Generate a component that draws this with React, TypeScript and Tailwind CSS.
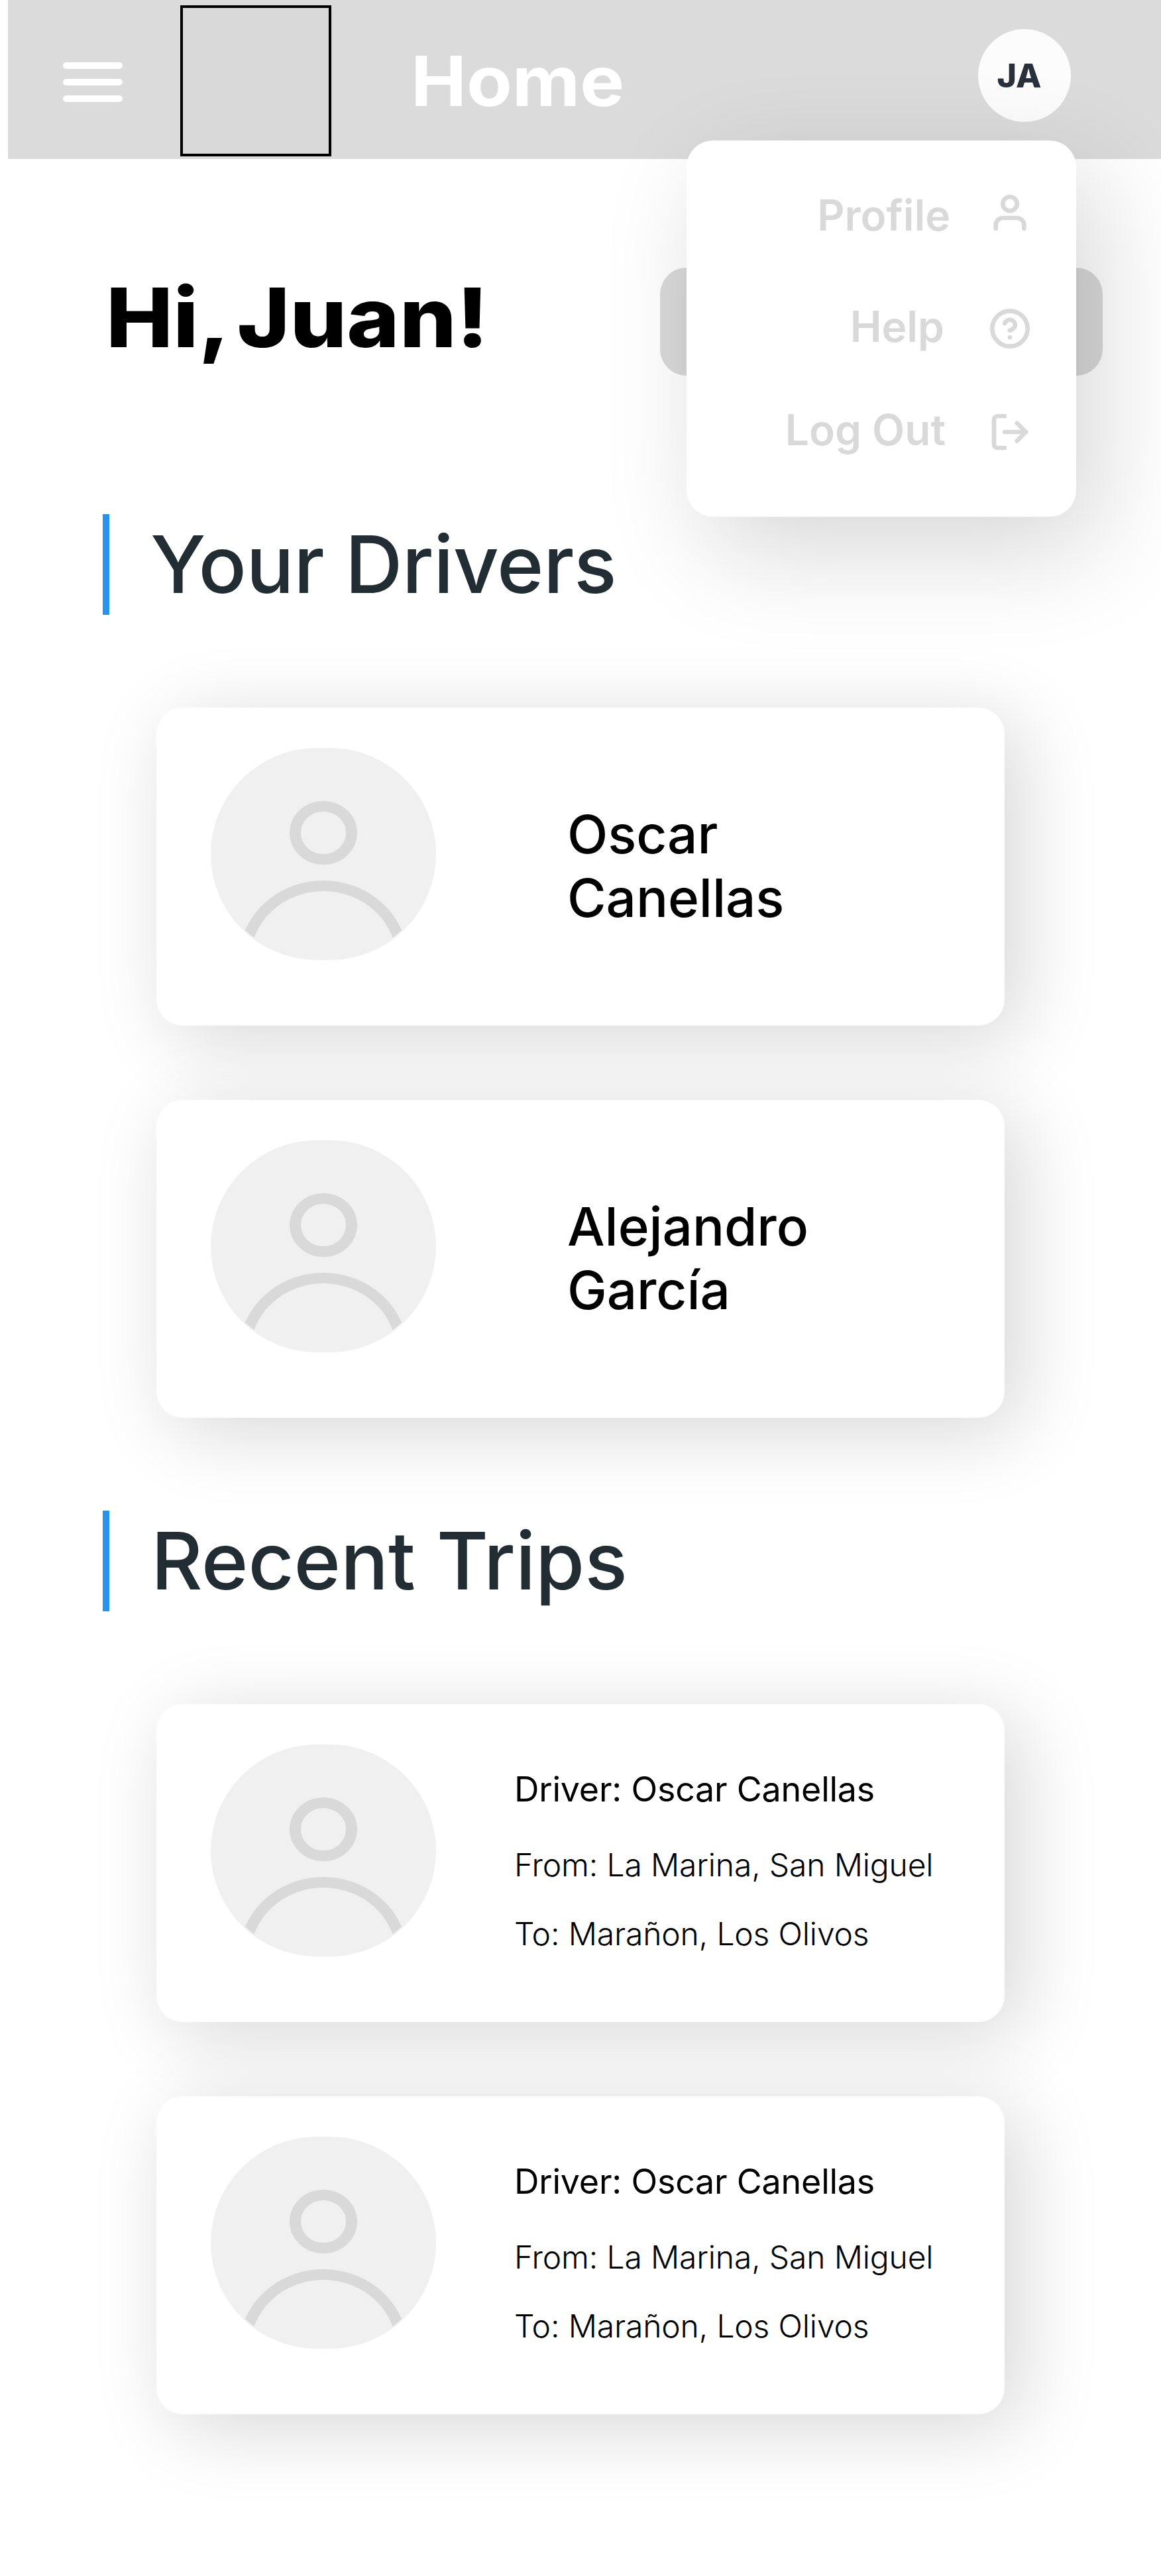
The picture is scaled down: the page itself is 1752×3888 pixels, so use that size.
import type { ReactNode } from "react";

const drivers = [
  ["Oscar", "Canellas"],
  ["Alejandro", "García"],
];

const trips = [
  { driver: "Oscar Canellas", from: "La Marina, San Miguel", to: "Marañon, Los Olivos" },
  { driver: "Oscar Canellas", from: "La Marina, San Miguel", to: "Marañon, Los Olivos" },
];

function Icon({ children }: { children: ReactNode }) {
  return (
    <svg
      viewBox="0 0 24 24"
      className="size-16 shrink-0"
      fill="none"
      stroke="currentColor"
      strokeWidth="2.5"
      strokeLinecap="round"
      strokeLinejoin="round"
    >
      {children}
    </svg>
  );
}

function Avatar() {
  return (
    <div className="h-80 w-[340px] shrink-0 overflow-hidden rounded-full bg-[#f0f0f0]">
      <svg viewBox="0 0 20 20" preserveAspectRatio="none" className="h-full w-full" fill="none" stroke="#d9d9d9">
        <clipPath id="avatar-clip">
          <circle cx="10" cy="10" r="10" />
        </clipPath>
        <g clipPath="url(#avatar-clip)">
          <circle cx="10" cy="8" r="2.5" />
          <circle cx="10" cy="20" r="7" />
        </g>
      </svg>
    </div>
  );
}

function Card({ children }: { children: ReactNode }) {
  return (
    <div className="flex h-[480px] w-[1280px] rounded-[40px] bg-white pt-[61px] pl-[82px] shadow-[24px_20px_120px_rgba(0,0,0,0.16)]">
      <Avatar />
      {children}
    </div>
  );
}

function SectionTitle({ className, children }: { className: string; children: ReactNode }) {
  return (
    <h2
      className={`ml-[155px] flex h-[152px] items-center border-l-[10px] border-[#2694e8] text-[120px] leading-[152px] font-medium text-[#222d33] ${className}`}
    >
      {children}
    </h2>
  );
}

function MenuRow({
  label,
  className,
  labelClass,
  children,
}: {
  label: string;
  className: string;
  labelClass: string;
  children: ReactNode;
}) {
  return (
    <div className={`flex h-16 items-start justify-end pr-[68px] ${className}`}>
      <span className={`text-[64px] leading-[64px] font-semibold whitespace-nowrap ${labelClass}`}>{label}</span>
      {children}
    </div>
  );
}

function UserMenu() {
  return (
    <div className="absolute top-[212px] left-[1036px] h-[568px] w-[588px] rounded-[40px] bg-white pt-[77px] text-[#d9d9d9] shadow-[32px_50px_160px_rgba(0,0,0,0.16)]">
      <MenuRow label="Profile" className="gap-[58px]" labelClass="mt-1">
        <Icon>
          <path d="M20 21v-2a4 4 0 0 0-4-4H8a4 4 0 0 0-4 4v2" />
          <circle cx="12" cy="7" r="4" />
        </Icon>
      </MenuRow>
      <MenuRow label="Help" className="mt-[111px] gap-[67px]" labelClass="-mt-[3px]">
        <Icon>
          <circle cx="12" cy="12" r="10" />
          <path d="M9.09 9a3 3 0 0 1 5.83 1c0 2-3 3-3 3" />
          <path d="M12 17h.01" />
        </Icon>
      </MenuRow>
      <MenuRow label="Log Out" className="mt-[92px] gap-[65px]" labelClass="-mt-[3px]">
        <Icon>
          <path d="M9 21H5a2 2 0 0 1-2-2V5a2 2 0 0 1 2-2h4" />
          <path d="m16 17 5-5-5-5" />
          <path d="M21 12H9" />
        </Icon>
      </MenuRow>
    </div>
  );
}

export default function App() {
  return (
    <div className="relative h-[3888px] w-[1752px] overflow-hidden bg-white font-['Inter',sans-serif] text-black">
      <header className="ml-3 flex h-60 bg-[#dbdbdb]">
        <div className="mt-[94px] ml-[83px] flex w-[90px] flex-col gap-[15px]">
          <div className="h-2.5 rounded-full bg-white" />
          <div className="h-2.5 rounded-full bg-white" />
          <div className="h-2.5 rounded-full bg-white" />
        </div>
        <div className="mt-2 ml-[87px] size-[228px] border-4 border-black bg-[#d9d9d9]" />
        <h1 className="mt-[62px] ml-[120px] origin-left scale-x-[1.07] text-[105px] leading-[120px] font-bold text-white">
          Home
        </h1>
        <div className="mt-11 mr-[136px] ml-auto flex size-[140px] items-center justify-center rounded-full bg-[#fcfcfc] pr-4 text-[50px] leading-none font-extrabold text-[#2a303c]">
          JA
        </div>
      </header>

      <div className="mt-[164px] flex h-[164px] items-start justify-between pr-[88px] pl-[160px]">
        <p className="origin-left scale-x-[1.09] text-[124px] leading-[150px] font-extrabold whitespace-nowrap [word-spacing:-12px]">
          Hi, Juan!
        </p>
        <div className="h-[163px] w-[668px] rounded-[40px] bg-[#d9d9d9]" />
      </div>

      <section className="mt-[208px]">
        <SectionTitle className="pl-[62px] tracking-[-0.5px]">Your Drivers</SectionTitle>
        <div className="mt-[140px] ml-[236px] flex flex-col gap-28">
          {drivers.map(([first, last]) => (
            <Card key={first}>
              <p className="mt-[82px] ml-[198px] text-[80px] leading-[96px] font-medium tracking-[-0.1px]">
                {first}
                <br />
                {last}
              </p>
            </Card>
          ))}
        </div>
      </section>

      <section className="mt-[140px]">
        <SectionTitle className="pl-[63px] tracking-[-0.1px]">Recent Trips</SectionTitle>
        <div className="mt-[140px] ml-[236px] flex flex-col gap-28">
          {trips.map((trip, i) => (
            <Card key={i}>
              <div className="mt-9 ml-[118px] whitespace-nowrap">
                <p className="text-[52px] leading-[64px] tracking-[-0.23px]">Driver: {trip.driver}</p>
                <p className="mt-[53px] text-[48px] leading-[58px] font-light tracking-[-0.16px]">From: {trip.from}</p>
                <p className="mt-[46px] text-[48px] leading-[58px] font-light tracking-[-0.16px]">To: {trip.to}</p>
              </div>
            </Card>
          ))}
        </div>
      </section>

      <UserMenu />
    </div>
  );
}
